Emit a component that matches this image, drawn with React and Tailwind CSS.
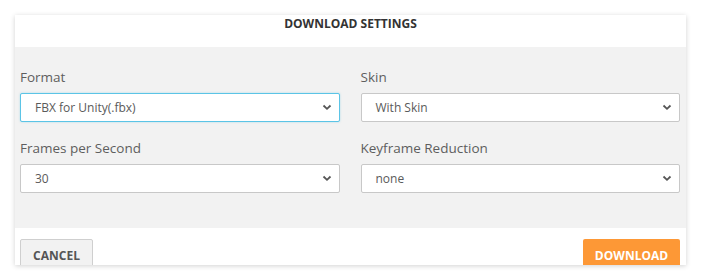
import React from "react";

function Chevron() {
  return (
    <svg width="10" height="7" viewBox="0 0 10 7" className="shrink-0">
      <path d="M1.5 1.5 L5 4.8 L8.5 1.5" fill="none" stroke="#555" strokeWidth="1.8" />
    </svg>
  );
}

function Field({ label, value, focused }) {
  return (
    <div className="flex flex-col">
      <div className="h-[20px] leading-[20px] text-[13.5px] text-[#5e5e5e] mb-[6px]">{label}</div>
      <div
        className={
          focused
            ? "h-[29px] bg-white border border-[#5bc4e6] shadow-[0_0_2px_rgba(91,196,230,0.5)] rounded-[2px] flex items-center justify-between pl-[14px] pr-[7px]"
            : "h-[29px] bg-white border border-[#c8c8c8] rounded-[2px] flex items-center justify-between pl-[14px] pr-[7px]"
        }
      >
        <span className="text-[12px] text-[#5a5a5a]">{value}</span>
        <Chevron />
      </div>
    </div>
  );
}

export default function App() {
  return (
    <div
      className="w-[701px] h-[280px] bg-white pt-[15px] pl-[15px]"
      style={{ fontFamily: '"Open Sans", "Noto Sans", sans-serif' }}
    >
      <div className="w-[671px] h-[250px] overflow-hidden bg-white shadow-[0_1px_5px_rgba(0,0,0,0.18)] flex flex-col">
        <div className="h-[32px] shrink-0 text-center text-[12px] font-bold text-[#333] leading-[16px] pt-[1px]">
          DOWNLOAD SETTINGS
        </div>
        <div className="h-[181px] shrink-0 bg-[#f2f2f2] pl-[5px] pr-[6px] pt-[20px] grid grid-cols-2 gap-x-[21px] gap-y-[16px] content-start">
          <Field label="Format" value="FBX for Unity(.fbx)" focused />
          <Field label="Skin" value="With Skin" />
          <Field label="Frames per Second" value="30" />
          <Field label="Keyframe Reduction" value="none" />
        </div>
        <div className="flex-1 flex justify-between items-start pt-[11px] pl-[5px] pr-[6px]">
          <button className="h-[34px] w-[73px] bg-[#f2f2f2] border border-[#cfcfcf] rounded-[2px] text-[12px] font-bold text-[#555]">
            CANCEL
          </button>
          <button className="h-[34px] w-[97px] bg-[#fd9836] rounded-[2px] text-[12px] font-bold text-white">
            DOWNLOAD
          </button>
        </div>
      </div>
    </div>
  );
}
